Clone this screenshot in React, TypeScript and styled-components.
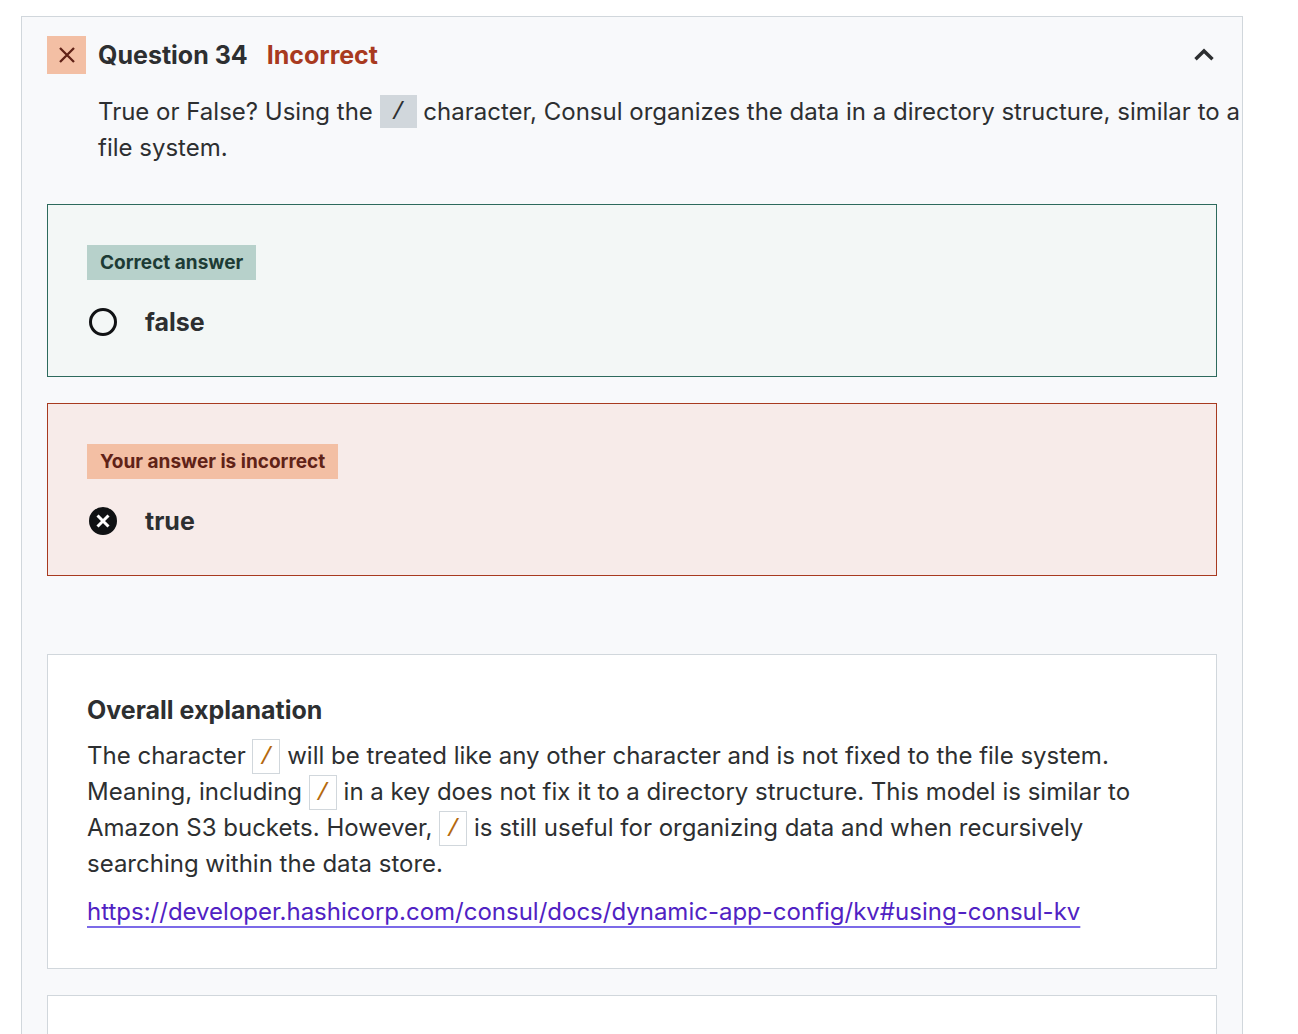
import React, { useState } from 'react';
import styled, { createGlobalStyle } from 'styled-components';

const GlobalStyle = createGlobalStyle`
  *, *::before, *::after { box-sizing: border-box; }
  body {
    margin: 0;
    background: #fff;
    color: #2d2f31;
    font-family: Inter, "Liberation Sans", Arial, sans-serif;
    font-size: 24px;
    line-height: 36px;
  }
`;

const Page = styled.main`
  display: flex;
  flex-direction: column;
  min-height: 100vh;
  padding: 16px 55px 0 21px;
`;

const Panel = styled.section`
  display: flex;
  flex-direction: column;
  flex: 1;
  padding: 19px 25px 0;
  background: #f8f9fb;
  border: 1px solid #d1d7dc;
  border-bottom: 0;
`;

const PanelHeader = styled.button`
  display: flex;
  align-items: center;
  width: 100%;
  padding: 0;
  border: 0;
  background: none;
  color: inherit;
  font: inherit;
  font-size: 25px;
  font-weight: 700;
  text-align: left;
  cursor: pointer;
`;

const StatusIcon = styled.span`
  display: flex;
  align-items: center;
  justify-content: center;
  width: 39px;
  height: 38px;
  margin-right: 12px;
  background: #f3bfa4;
  color: #602217;
`;

const Status = styled.span`
  flex: 1;
  margin-left: 19px;
  color: #a83a20;
`;

const Prompt = styled.p`
  margin: 20px -25px 38px 0;
  padding-left: 51px;
`;

const Code = styled.code`
  display: inline-block;
  margin-top: 1px;
  padding-top: 3px;
  font-family: "Liberation Mono", monospace;
  font-size: 24px;
  line-height: 30px;
  text-align: center;
  vertical-align: top;
`;

const PromptCode = styled(Code)`
  width: 37px;
  background: #d1d7dc;
`;

const InlineCode = styled(Code)`
  width: 28px;
  background: #fff;
  border: 1px solid #d1d7dc;
  color: #b4690e;
`;

const Answers = styled.div`
  display: grid;
  gap: 26px;
  margin-bottom: 78px;
`;

const Answer = styled.div<{ $correct: boolean }>`
  padding: 40px 39px 36px;
  background: ${(p) => (p.$correct ? '#f3f7f6' : '#f7ebe9')};
  border: 1px solid ${(p) => (p.$correct ? '#2d6a5d' : '#a83a20')};
`;

const Badge = styled.div<{ $correct: boolean }>`
  width: fit-content;
  margin-bottom: 24px;
  padding: 0 13px;
  background: ${(p) => (p.$correct ? '#b7d1cb' : '#f3bfa4')};
  color: ${(p) => (p.$correct ? '#1d3b35' : '#602217')};
  font-size: 19px;
  font-weight: 700;
  line-height: 35px;
`;

const Choice = styled.label`
  display: flex;
  align-items: center;
  font-size: 25px;
  font-weight: 700;
`;

const Radio = styled.input`
  appearance: none;
  width: 28px;
  height: 28px;
  margin: 0 28px 0 2px;
  border: 3px solid #101214;
  border-radius: 50%;

  &:checked {
    background: #101214
      url("data:image/svg+xml,%3Csvg xmlns='http://www.w3.org/2000/svg' viewBox='0 0 22 22'%3E%3Cpath d='M5.5 5.5l11 11M16.5 5.5l-11 11' stroke='%23fff' stroke-width='3'/%3E%3C/svg%3E")
      center / 100% no-repeat;
  }
`;

const Card = styled.article`
  padding: 37px 39px 38px;
  background: #fff;
  border: 1px solid #d1d7dc;
`;

const NextCard = styled.article`
  flex: 1;
  min-height: 39px;
  margin-top: 26px;
  background: #fff;
  border: 1px solid #d1d7dc;
  border-bottom: 0;
`;

const CardTitle = styled.h2`
  margin: 0 0 10px;
  font-size: 25px;
  font-weight: 700;
`;

const Text = styled.p`
  margin: 0 0 12px;
`;

const Link = styled.a`
  color: #5022c3;
  text-decoration: underline;
  text-decoration-color: #7c6ae8;
  text-decoration-thickness: 2px;
  text-underline-offset: 6px;
  text-decoration-skip-ink: none;
`;

const CrossIcon = () => (
  <svg width="16" height="16" viewBox="0 0 16 16" fill="none" stroke="currentColor" strokeWidth="2.3" aria-hidden="true">
    <path d="M1 1L15 15M15 1L1 15" />
  </svg>
);

const ChevronIcon = ({ open }: { open: boolean }) => (
  <svg width="26" height="26" viewBox="0 0 26 26" fill="none" stroke="currentColor" strokeWidth="3.4" aria-hidden="true">
    <path d={open ? 'M4.5 17.3L13 9L21.5 17.3' : 'M4.5 9L13 17.3L21.5 9'} />
  </svg>
);

export default function App() {
  const [open, setOpen] = useState(true);
  const [choice, setChoice] = useState('true');
  const answers = [
    { value: 'false', correct: true, badge: 'Correct answer' },
    { value: 'true', correct: false, badge: 'Your answer is incorrect' },
  ];

  return (
    <>
      <GlobalStyle />
      <Page>
        <Panel>
          <PanelHeader aria-expanded={open} onClick={() => setOpen(!open)}>
            <StatusIcon><CrossIcon /></StatusIcon>
            <span>Question 34</span>
            <Status>Incorrect</Status>
            <ChevronIcon open={open} />
          </PanelHeader>
          {open && (
            <>
              <Prompt>
                True or False? Using the <PromptCode>/</PromptCode> character, Consul organizes the data in a directory structure, similar to a file system.
              </Prompt>
              <Answers>
                {answers.map((a) => (
                  <Answer key={a.value} $correct={a.correct}>
                    <Badge $correct={a.correct}>{a.badge}</Badge>
                    <Choice>
                      <Radio
                        type="radio"
                        name="answer"
                        checked={choice === a.value}
                        onChange={() => setChoice(a.value)}
                      />
                      {a.value}
                    </Choice>
                  </Answer>
                ))}
              </Answers>
              <Card>
                <CardTitle>Overall explanation</CardTitle>
                <Text>
                  The character <InlineCode>/</InlineCode> will be treated like any other character and is not fixed to the file system.
                  Meaning, including <InlineCode>/</InlineCode> in a key does not fix it to a directory structure. This model is similar to
                  Amazon S3 buckets. However, <InlineCode>/</InlineCode> is still useful for organizing data and when recursively
                  searching within the data store.
                </Text>
                <Link href="https://developer.hashicorp.com/consul/docs/dynamic-app-config/kv#using-consul-kv">
                  https://developer.hashicorp.com/consul/docs/dynamic-app-config/kv#using-consul-kv
                </Link>
              </Card>
              <NextCard />
            </>
          )}
        </Panel>
      </Page>
    </>
  );
}
